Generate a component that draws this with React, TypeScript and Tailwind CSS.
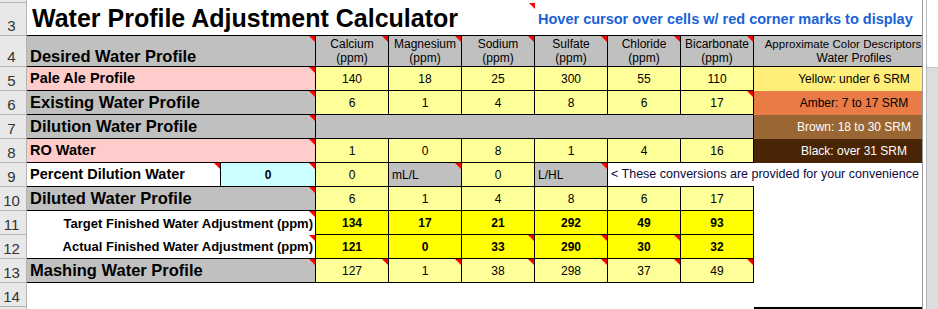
import React from 'react';

const cols = 'grid grid-cols-[27px_194px_95px_73px_73px_73px_73px_73px_73px_200px]';

const ions = ['Calcium', 'Magnesium', 'Sodium', 'Sulfate', 'Chloride', 'Bicarbonate'];

// value rows: [value, has red corner mark]
type V = [string, boolean?];

const desired: V[] = [['140'], ['18'], ['25'], ['300'], ['55'], ['110']];
const existing: V[] = [['6'], ['1'], ['4'], ['8'], ['6'], ['17', true]];
const roWater: V[] = [['1'], ['0'], ['8'], ['1'], ['4'], ['16']];
const diluted: V[] = [['6'], ['1'], ['4'], ['8'], ['6'], ['17']];
const target: V[] = [['134'], ['17'], ['21'], ['292'], ['49'], ['93']];
const actual: V[] = [['121'], ['0'], ['33', true], ['290', true], ['30', true], ['32']];
const mashing: V[] = [['127', true], ['1', true], ['38', true], ['298', true], ['37', true], ['49', true]];

function Mark() {
  return (
    <span className="absolute right-0 top-0 h-[6px] w-[6px] bg-[#ff0000] [clip-path:polygon(0_0,100%_0,100%_100%)]" />
  );
}

function RowHead({ n }: { n?: number }) {
  return (
    <div className="flex items-end justify-center border-r border-b border-[#b3b3b3] bg-[#e8e8e8] pb-[2px] pr-[3px] text-[15px] leading-none text-[#333]">
      {n}
    </div>
  );
}

function Val({ v, mark, bold, bg }: { v?: string; mark?: boolean; bold?: boolean; bg: string }) {
  return (
    <div
      className={`relative flex items-center justify-center border-r border-b border-black text-[12px] leading-none ${bg} ${
        bold ? 'font-bold' : ''
      }`}
    >
      {v}
      {mark && <Mark />}
    </div>
  );
}

function BigLabel({ text }: { text: string }) {
  return (
    <div className="relative col-span-2 flex items-center border-r border-b border-black bg-[#c0c0c0] pl-[3px] text-[16.5px] font-bold leading-none whitespace-nowrap">
      {text}
      <Mark />
    </div>
  );
}

function PinkLabel({ text }: { text: string }) {
  return (
    <div className="relative col-span-2 flex items-center border-r border-b border-black bg-[#ffcccc] pl-[3px] text-[14.5px] font-bold leading-none whitespace-nowrap">
      {text}
      <Mark />
    </div>
  );
}

function Values({ row, bg, bold }: { row: V[]; bg: string; bold?: boolean }) {
  return (
    <>
      {row.map(([v, m], i) => (
        <Val key={i} v={v} mark={m} bg={bg} bold={bold} />
      ))}
    </>
  );
}

function Desc({ text, bg }: { text: string; bg: string }) {
  return <div className={`flex items-center justify-center text-[12px] leading-none whitespace-nowrap ${bg}`}>{text}</div>;
}

export default function App() {
  return (
    <div className="flex h-[309px] w-[938px] overflow-hidden bg-white font-['Liberation_Sans',Arial,sans-serif] text-black">
      <div className="w-[922px] shrink-0 overflow-hidden">
        {/* row 2, mostly scrolled away */}
        <div className={`${cols} h-[3px]`}>
          <RowHead />
        </div>

        {/* row 3 - title */}
        <div className={`${cols} h-[33px]`}>
          <RowHead n={3} />
          <div className="relative col-span-5 flex items-end border-b border-black pb-[4px] pl-[5px] text-[25px] font-bold leading-none whitespace-nowrap">
            Water Profile Adjustment Calculator
            <Mark />
          </div>
          <div className="col-span-4 flex items-end border-b border-black pb-[9px] pl-[3px] text-[14.5px] font-bold leading-none whitespace-nowrap text-[#1a62d6]">
            Hover cursor over cells w/ red corner marks to display
          </div>
        </div>

        {/* row 4 - headers */}
        <div className={`${cols} h-[31px]`}>
          <RowHead n={4} />
          <div className="relative col-span-2 flex items-end border-r border-b border-black bg-[#c0c0c0] pb-[2px] pl-[3px] text-[16.5px] font-bold leading-none">
            Desired Water Profile
            <Mark />
          </div>
          {ions.map((ion) => (
            <div
              key={ion}
              className="relative flex flex-col items-center justify-center border-r border-b border-black bg-[#c0c0c0] text-[12px] leading-[14px]"
            >
              <span>{ion}</span>
              <span>(ppm)</span>
              <Mark />
            </div>
          ))}
          <div className="flex flex-col items-center justify-center border-b border-black bg-[#c0c0c0] text-[12px] leading-[14px] whitespace-nowrap">
            <span className="pr-[22px] text-[11.5px]">Approximate Color Descriptors</span>
            <span>Water Profiles</span>
          </div>
        </div>

        {/* row 5 */}
        <div className={`${cols} h-[24px]`}>
          <RowHead n={5} />
          <PinkLabel text="Pale Ale Profile" />
          <Values row={desired} bg="bg-[#ffff99]" />
          <Desc text="Yellow: under 6 SRM" bg="bg-[#ffef7a]" />
        </div>

        {/* row 6 */}
        <div className={`${cols} h-[24px]`}>
          <RowHead n={6} />
          <BigLabel text="Existing Water Profile" />
          <Values row={existing} bg="bg-[#ffff99]" />
          <Desc text="Amber: 7 to 17 SRM" bg="bg-[#e97c46]" />
        </div>

        {/* row 7 */}
        <div className={`${cols} h-[24px]`}>
          <RowHead n={7} />
          <BigLabel text="Dilution Water Profile" />
          <div className="col-span-6 border-r border-b border-black bg-[#c0c0c0]" />
          <Desc text="Brown: 18 to 30 SRM" bg="bg-[#9a6634] text-white" />
        </div>

        {/* row 8 */}
        <div className={`${cols} h-[24px]`}>
          <RowHead n={8} />
          <PinkLabel text="RO Water" />
          <Values row={roWater} bg="bg-[#ffff99]" />
          <Desc text="Black: over 31 SRM" bg="bg-[#4a2505] text-white" />
        </div>

        {/* row 9 */}
        <div className={`${cols} h-[24px]`}>
          <RowHead n={9} />
          <div className="relative flex items-center border-r border-b border-black bg-white pl-[3px] text-[14.5px] font-bold leading-none whitespace-nowrap">
            Percent Dilution Water
            <Mark />
          </div>
          <Val v="0" bold mark bg="bg-[#ccffff]" />
          <Val v="0" bg="bg-[#ffff99]" />
          <div className="relative flex items-center border-r border-b border-black bg-[#c0c0c0] pl-[3px] text-[12px] leading-none">
            mL/L
            <Mark />
          </div>
          <Val v="0" bg="bg-[#ffff99]" />
          <div className="relative flex items-center border-r border-b border-black bg-[#c0c0c0] pl-[3px] text-[12px] leading-none">
            L/HL
            <Mark />
          </div>
          <div className="col-span-3 flex flex-col">
            <div className="flex flex-1 items-center pl-[3px] text-[12.5px] leading-none whitespace-nowrap text-[#0a0a3c]">
              &lt; These conversions are provided for your convenience
            </div>
            <div className="h-px w-[146px] bg-black" />
          </div>
        </div>

        {/* row 10 */}
        <div className={`${cols} h-[24px]`}>
          <RowHead n={10} />
          <BigLabel text="Diluted Water Profile" />
          <Values row={diluted} bg="bg-[#ffff99]" />
          <div />
        </div>

        {/* row 11 */}
        <div className={`${cols} h-[24px]`}>
          <RowHead n={11} />
          <div className="relative col-span-2 flex items-center justify-end border-r border-black bg-white pr-[2px] text-[13px] font-bold leading-none whitespace-nowrap">
            Target Finished Water Adjustment (ppm)
            <Mark />
          </div>
          <Values row={target} bg="bg-[#ffff00]" bold />
          <div />
        </div>

        {/* row 12 */}
        <div className={`${cols} h-[24px]`}>
          <RowHead n={12} />
          <div className="relative col-span-2 flex items-center justify-end border-r border-b border-black bg-white pr-[2px] text-[13px] font-bold leading-none whitespace-nowrap">
            Actual Finished Water Adjustment (ppm)
            <Mark />
          </div>
          <Values row={actual} bg="bg-[#ffff00]" bold />
          <div />
        </div>

        {/* row 13 */}
        <div className={`${cols} h-[24px]`}>
          <RowHead n={13} />
          <BigLabel text="Mashing Water Profile" />
          <Values row={mashing} bg="bg-[#ffff99]" />
          <div />
        </div>

        {/* row 14 */}
        <div className={`${cols} h-[24px]`}>
          <RowHead n={14} />
        </div>

        {/* row 15, top edge only */}
        <div className={`${cols} h-[2px]`}>
          <div className="bg-[#e8e8e8] border-r border-[#b3b3b3]" />
          <div className="col-span-8" />
          <div className="bg-black" />
        </div>
      </div>

      {/* window edge */}
      <div className="flex w-[16px] shrink-0">
        <div className="w-px bg-[#9b9b9b]" />
        <div className="w-[3px] bg-white" />
        <div className="flex flex-1 flex-col border-l border-[#b9b9b9]">
          <div className="h-[68px] border-b border-[#c6c6c6] bg-white" />
          <div className="flex-1 bg-[#dddddd]" />
        </div>
      </div>
    </div>
  );
}
